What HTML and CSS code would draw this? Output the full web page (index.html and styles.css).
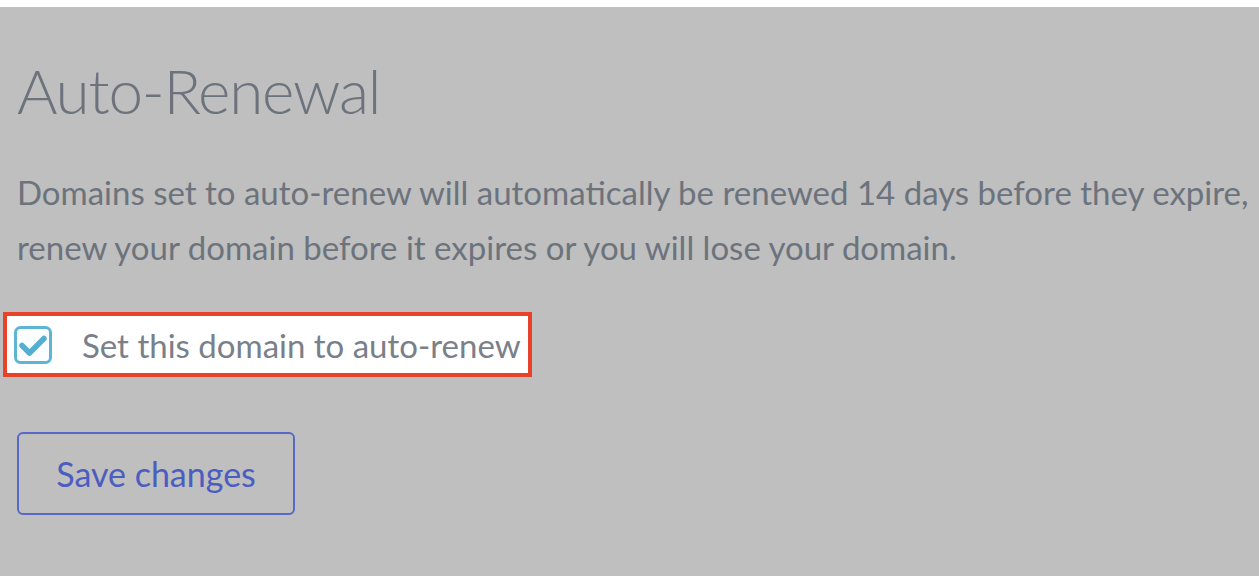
FILE: index.html
```html
<!DOCTYPE html>
<html lang="en">
<head>
<meta charset="utf-8">
<title>Auto-Renewal</title>
<link rel="stylesheet" href="styles.css">
</head>
<body>
<main class="page">
  <h1 class="title">Auto-Renewal</h1>
  <p class="desc">Domains set to auto-renew will automatically be renewed 14 days before they expire,<br>renew your domain before it expires or you will lose your domain.</p>
  <label class="check-row">
    <span class="checkbox">
      <svg viewBox="0 0 38 38" width="38" height="38" aria-hidden="true">
        <rect x="1.5" y="1.5" width="35" height="35" rx="5" ry="5" fill="#fbfdfe" stroke="#5cb6d3" stroke-width="3"/>
        <path d="M8 19.5 L15.5 27 L30 12.5" fill="none" stroke="#52afd0" stroke-width="5.5" stroke-linecap="round" stroke-linejoin="round"/>
      </svg>
    </span>
    <span class="check-label">Set this domain to auto-renew</span>
  </label>
  <div class="actions">
    <button class="btn" type="button">Save changes</button>
  </div>
</main>
</body>
</html>
```

FILE: styles.css
```css
html, body {
  margin: 0;
  padding: 0;
  background: #bfbfbf;
  overflow: hidden;
}

.page {
  box-sizing: border-box;
  min-height: 576px;
  border-top: 7px solid #ffffff;
  padding: 0 0 0 17px;
  background: #bfbfbf;
  font-family: "Source Sans Pro", Lato, "Liberation Sans", sans-serif;
  display: flex;
  flex-direction: column;
  align-items: flex-start;
}

.title {
  margin: 43px 0 0;
  font-weight: 300;
  font-size: 62px;
  letter-spacing: -1.2px;
  line-height: 80px;
  color: #6c737d;
}

.desc {
  margin: 35px 0 0;
  font-size: 33px;
  line-height: 55px;
  color: #6c737d;
  white-space: nowrap;
}

.check-row {
  margin: 37px 0 0 -14px;
  box-sizing: border-box;
  height: 65px;
  display: inline-flex;
  align-items: center;
  gap: 30px;
  padding: 0 7px;
  border: 4px solid #e8432a;
  background: #ffffff;
}

.checkbox {
  display: block;
  width: 38px;
  height: 38px;
}

.checkbox svg {
  display: block;
}

.check-label {
  font-size: 33px;
  color: #7a8089;
}

.actions {
  margin-top: 55px;
}

.btn {
  box-sizing: border-box;
  width: 278px;
  height: 83px;
  border: 2px solid #5768c6;
  border-radius: 6px;
  background: transparent;
  font-family: "Source Sans Pro", Lato, "Liberation Sans", sans-serif;
  font-size: 34px;
  color: #4b5dbf;
  padding: 0;
}
```
